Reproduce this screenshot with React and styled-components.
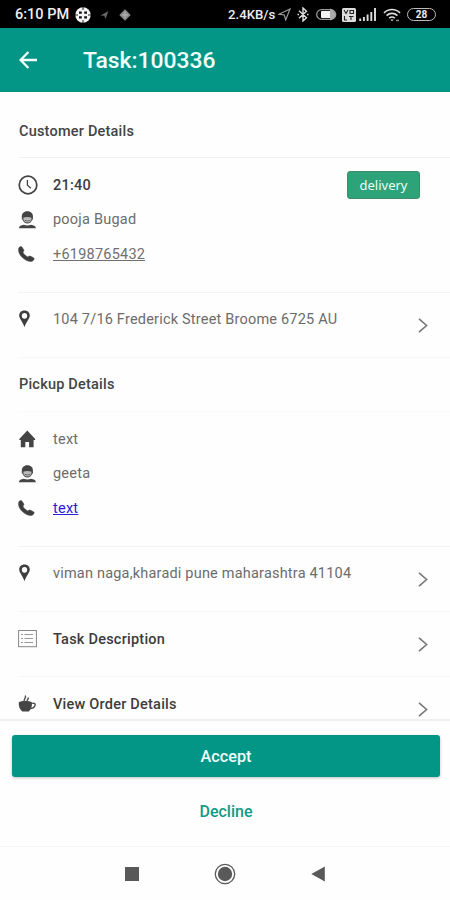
import styled, { createGlobalStyle } from "styled-components"

const contacts = [
    { icon: "clock", text: "21:40", bold: true, tag: "delivery" },
    { icon: "user", text: "pooja Bugad", spacing: "0.22px" },
    { icon: "phone", text: "+6198765432", link: "#707070", spacing: "0.22px" },
]

const pickup = [
    { icon: "home", text: "text" },
    { icon: "user", text: "geeta" },
    { icon: "phone", text: "text", link: "#2a20d8" },
]

export default function App (){
    return(
        <>
            <GlobalStyle />
            <Screen>
                <StatusBar>
                    <Clock>6:10 PM</Clock>
                    <StatusIcon name="app" width={16} height={16} left={6}/>
                    <StatusIcon name="smallArrow" width={9} height={10} left={9}/>
                    <StatusIcon name="diamond" width={12} height={12} left={10}/>
                    <Speed>2.4KB/s</Speed>
                    <StatusIcon name="arrow" width={13} height={13} left={3}/>
                    <StatusIcon name="bluetooth" width={12} height={15} left={6}/>
                    <StatusIcon name="toggle" width={21} height={13} left={7}/>
                    <StatusIcon name="volte" width={14} height={14} left={5}/>
                    <StatusIcon name="signal" width={17} height={13} left={3}/>
                    <StatusIcon name="wifi" width={18} height={14} left={7}/>
                    <Battery>28</Battery>
                </StatusBar>

                <Header>
                    <BackButton aria-label="Back">
                        <svg width="18" height="18" viewBox="0 0 18 18" fill="none" stroke="currentColor" strokeWidth="2.3">
                            <path d="M18 9H1.8M9.4 1L1.6 9l7.8 8" />
                        </svg>
                    </BackButton>
                    <Title>Task:100336</Title>
                </Header>

                <Content>
                    <Heading $first>Customer Details</Heading>
                    <ContactList items={contacts} />
                    <LinkRow icon="pin" spacing="0.2px">104 7/16 Frederick Street Broome 6725 AU</LinkRow>
                    <Heading>Pickup Details</Heading>
                    <ContactList items={pickup} />
                    <LinkRow icon="pin" spacing="0.2px">viman naga,kharadi pune maharashtra 41104</LinkRow>
                    <LinkRow icon="list" bold>Task Description</LinkRow>
                    <LinkRow icon="cup" bold>View Order Details</LinkRow>
                </Content>

                <Footer>
                    <AcceptButton>Accept</AcceptButton>
                    <DeclineButton>Decline</DeclineButton>
                </Footer>

                <NavBar>
                    <svg width="14" height="14"><rect width="14" height="14" fill="#595959" /></svg>
                    <svg width="22" height="22" viewBox="0 0 22 22">
                        <circle cx="11" cy="11" r="9.7" fill="none" stroke="#595959" strokeWidth="1.3" />
                        <circle cx="11" cy="11" r="7.2" fill="#595959" />
                    </svg>
                    <svg width="14" height="16" viewBox="0 0 14 16"><path d="M13.8.4v15L.3 7.9z" fill="#595959" /></svg>
                </NavBar>
            </Screen>
        </>
    )
}

function ContactList({ items }){
    return(
        <Contacts>
            {items.map((item, index)=> (
                <ContactRow key={index}>
                    <IconBox><Icon name={item.icon}/></IconBox>
                    {item.link
                        ? <PhoneLink href="#" $color={item.link} $spacing={item.spacing}>{item.text}</PhoneLink>
                        : <Label $bold={item.bold} $spacing={item.spacing}>{item.text}</Label>}
                    {item.tag && <Tag>{item.tag}</Tag>}
                </ContactRow>
            ))}
        </Contacts>
    )
}

function LinkRow({ icon, bold, spacing, children }){
    return(
        <Row>
            <IconBox><Icon name={icon}/></IconBox>
            <RowLabel $bold={bold} $spacing={spacing}>{children}</RowLabel>
            <Chevron width="10" height="15" viewBox="0 0 10 15">
                <path d="M1 .8l7.6 6.7L1 14.2" />
            </Chevron>
        </Row>
    )
}

function Icon({ name }){
    switch(name){
        case "clock":
            return(
                <svg width="20" height="20" viewBox="0 0 20 20" fill="none" stroke="#444">
                    <circle cx="10" cy="10" r="8.8" strokeWidth="1.7" />
                    <path d="M9.4 5v5.2l3.6 3" strokeWidth="1.3" />
                </svg>
            )
        case "user":
            return(
                <svg width="19" height="18" viewBox="0 0 19 18">
                    <path d="M3.900 7C3.400 2.500 5.800.3 9.400.3s6 2.200 5.500 6.700l.2 1.200-1 .6c-.6 2.400-2.500 3.800-4.700 3.800s-4.100-1.400-4.700-3.800l-1-.6z" fill="#444" />
                    <path d="M5.200 6.800c2.800-1 5.600-1 8.400 0 0 2.900-1.700 4.700-4.200 4.700s-4.200-1.800-4.200-4.700z" fill="#bbb" />
                    <path d="M6.800 9.300c1.600.8 3.600.8 5.200 0" fill="none" stroke="#666" />
                    <path d="M.9 17.300c.2-2.300 2.100-3.200 5-3.600 2 1 5 1 7 0 2.900.4 4.800 1.300 5 3.600z" fill="#444" />
                </svg>
            )
        case "phone":
            return(
                <svg width="17" height="17" viewBox="0 0 17 17">
                    <path d="M1.300 1.200C2.200.3 3.400.3 4.100 1.200l1.600 2.600c.5.9.1 1.500-.8 2.200.8 2.100 2.500 3.700 4.900 5 1-.9 1.900-1.200 2.800-.7l2.900 1.400c.9.7.8 1.600-.2 2.700-1.800 1.900-5 1.200-7.900-.6C3.500 11.500.5 7.600.5 3.800c0-1 .2-1.900.8-2.600z" fill="#3e3e3e" stroke="#3e3e3e" strokeWidth=".5" />
                </svg>
            )
        case "home":
            return(
                <svg width="18" height="18" viewBox="0 0 18 18">
                    <path d="M9.300.5L1.300 9v1h1.500v7.300h4.500v-5.200h3.800v5.200h4.500V10h1.600V9z" fill="#444" />
                </svg>
            )
        case "pin":
            return(
                <svg width="13" height="18" viewBox="-1 0 13 18">
                    <path fillRule="evenodd" d="M5.500.4C2.200.4.200 2.600.200 5.600c0 3.300 3.200 5.600 5.300 11.600 2.100-6 5.300-8.300 5.300-11.600C10.800 2.600 8.800.4 5.500.4zm0 2.500a2.700 2.900 0 1 1 0 5.800 2.700 2.900 0 0 1 0-5.800z" fill="#3e3e3e" />
                </svg>
            )
        case "list":
            return(
                <svg width="20" height="19" viewBox="0 0 20 19" fill="none" stroke="#888">
                    <rect x=".6" y="1.500" width="17.800" height="16.200" />
                    <path d="M3 5.500h2M3 9.500h2M3 13.500h2M6.500 5.500H15M6.500 9.500H15M6.500 13.500H15" strokeWidth="1.200" stroke="#999" />
                </svg>
            )
        case "cup":
            return(
                <svg width="18" height="19" viewBox="0 0 18 19">
                    <path d="M.8 8.300C3 6.500 11.500 6.500 13.900 8.300c.3 3.800-.5 6.800-3.100 9.200H4.200C1.500 15.200.5 12.200.8 8.300z" fill="#444" />
                    <path d="M13.600 9.500c2-.8 3.900-.3 3.500 1.700-.3 2-2.200 3.200-4.700 3.500" fill="none" stroke="#444" strokeWidth="1.300" />
                    <path d="M6.500 7.500C4.700 5.500 8.700 4.300 7.300 1.500M9.300 7.500c-1.200-1.500 1.600-2.200 1-4" fill="none" stroke="#555" strokeWidth="1.500" />
                </svg>
            )
        default:
            return null
    }
}

const glyphs = {
    app: (
        <>
            <circle cx="8" cy="8" r="7.700" fill="#f4f4f4" />
            <path d="M4 4.500h2.800v2.300H4zM9.200 4.500H12v2.300H9.200zM4 9.300h2.800v2.300H4zM9.200 9.300H12v2.300H9.200z" fill="#111" />
            <path d="M8 0v3M8 13v3M0 8h3M13 8h3" stroke="#222" />
        </>
    ),
    smallArrow: <path d="M.5 5.500L8.500 1 5.500 9 4.300 5.800z" fill="#666" />,
    diamond: (
        <>
            <path d="M6 .3L11.700 6 6 11.700.3 6z" fill="#8a8a8a" />
            <path d="M6 3v6M3 6h6" stroke="#b8b8b8" />
        </>
    ),
    arrow: <path d="M1 6.200L12 1 7.700 12 6.300 7z" fill="none" stroke="#999" strokeWidth="1.200" />,
    bluetooth: <path d="M2 3.800l7.500 7L6 14V1l3.500 3.200-7.500 7M.5 7.500h1.500M10 7.500h1.500" fill="none" stroke="#ddd" strokeWidth="1.400" />,
    toggle: (
        <>
            <rect x=".7" y="1.700" width="19" height="9.600" rx="4.800" fill="none" stroke="#999" strokeWidth="1.300" />
            <rect x="5" y="3" width="10" height="7" rx="1" fill="#f4f4f4" />
            <path d="M14 .5c3 1 5 3 5.500 6-.5 3-2.500 5-5.500 6z" fill="#aaa" />
        </>
    ),
    volte: (
        <>
            <rect width="14" height="14" rx="1.500" fill="#ddd" />
            <path d="M2 2l2 3.500L6 2M8 2.500h3.500v3H8zM2.500 8v4H5M7 8.500h4.500M9 8.500V12" fill="none" stroke="#222" strokeWidth="1.100" />
        </>
    ),
    signal: <path d="M1.200 13v-2.500M4.900 13V9M8.600 13V6.500M12.300 13V4M16 13V0" stroke="#ddd" strokeWidth="1.900" />,
    wifi: (
        <>
            <path d="M1 5c4.400-4.600 11.600-4.600 16 0M3.600 7.600c3-3 7.800-3 10.800 0M6.200 10.200c1.600-1.600 4-1.600 5.600 0" fill="none" stroke="#ddd" strokeWidth="1.600" />
            <path d="M7.300 11.500L9 13.300l1.700-1.800z" fill="#ddd" />
            <path d="M13 12.500h3" stroke="#888" strokeWidth="1.500" />
        </>
    ),
}

function StatusIcon({ name, width, height, left }){
    return(
        <Glyph width={width} height={height} viewBox={`0 0 ${width} ${height}`} $left={left}>
            {glyphs[name]}
        </Glyph>
    )
}

const GlobalStyle = createGlobalStyle`
    *{
        box-sizing: border-box;
    }
    body{
        margin: 0;
        background-color: #fefefe;
        font-family: Roboto, sans-serif;
    }
    button{
        border: none;
        font-family: inherit;
        cursor: pointer;
    }
`

const Screen = styled.div`
    display: flex;
    flex-direction: column;
    width: 450px;
    height: 900px;
    overflow: hidden;
    background-color: #fefefe;
`

const StatusBar = styled.div`
    display: flex;
    align-items: center;
    flex-shrink: 0;
    height: 28px;
    padding: 1px 14px 0 15px;
    background-color: #000;
    color: #ededed;
`

const Clock = styled.span`
    width: 54px;
    font-size: 14.500px;
    font-weight: 500;
    white-space: nowrap;
`

const Speed = styled.span`
    width: 47px;
    margin-left: auto;
    font-size: 13.200px;
    font-weight: 500;
    white-space: nowrap;
`

const Glyph = styled.svg`
    flex-shrink: 0;
    margin-left: ${({ $left }) => $left}px;
`

const Battery = styled.span`
    width: 29px;
    height: 13px;
    margin-left: 6px;
    border: 1.500px solid #bbb;
    border-radius: 7px;
    font-size: 10px;
    font-weight: 700;
    line-height: 11px;
    text-align: center;
`

const Header = styled.header`
    display: flex;
    align-items: center;
    flex-shrink: 0;
    height: 64px;
    padding-left: 19px;
    background-color: #039686;
    color: #f2fffc;
`

const BackButton = styled.button`
    display: flex;
    width: 18px;
    padding: 0;
    background: none;
    color: inherit;
`

const Title = styled.h1`
    margin: 0 0 0 46px;
    padding-top: 2px;
    font-size: 22.900px;
    font-weight: 500;
    line-height: 28px;
`

const Content = styled.main`
    flex: 1;
    min-height: 0;
    overflow: hidden;
`

const Heading = styled.h2`
    height: ${({ $first }) => $first ? "66px" : "53.500px"};
    margin: 0 0 0 19px;
    padding-top: ${({ $first }) => $first ? "30px" : "17px"};
    border-bottom: 1px solid ${({ $first }) => $first ? "#f1f1f1" : "#fafafa"};
    color: #444;
    font-size: 14.500px;
    font-weight: 500;
    line-height: 20px;
    letter-spacing: 0.21px;
`

const Contacts = styled.div`
    height: 135px;
    margin-left: 18px;
    padding-top: 10px;
    border-bottom: 1px solid #f3f3f3;
`

const ContactRow = styled.div`
    display: flex;
    align-items: center;
    height: 34.500px;
`

const IconBox = styled.span`
    display: flex;
    flex-shrink: 0;
    width: 35px;
`

const Label = styled.span`
    padding-top: 1px;
    color: ${({ $bold }) => $bold ? "#3c3c3c" : "#6c6c6c"};
    font-size: 14.500px;
    font-weight: ${({ $bold }) => $bold ? 500 : 400};
    line-height: 20px;
    letter-spacing: ${({ $spacing }) => $spacing || "0.23px"};
    white-space: nowrap;
`

const RowLabel = styled(Label)`
    padding-top: ${({ $bold }) => $bold ? "1px" : "0"};
`

const PhoneLink = styled.a`
    padding-top: 1px;
    color: ${({ $color }) => $color};
    font-size: 14.500px;
    line-height: 20px;
    letter-spacing: ${({ $spacing }) => $spacing || "0.23px"};
`

const Tag = styled.span`
    width: 73px;
    height: 28px;
    margin: 0 30px 0 auto;
    border: 1px solid #3c8d6b;
    border-radius: 3px;
    background-color: #2ea279;
    color: #e8fff6;
    font-family: "Noto Sans", sans-serif;
    font-size: 13px;
    line-height: 26px;
    text-align: center;
`

const Row = styled.div`
    display: flex;
    align-items: flex-start;
    height: 65.300px;
    margin-left: 18px;
    padding: 17px 22px 0 0;
    border-bottom: 1px solid #f7f7f7;
`

const Chevron = styled.svg`
    flex-shrink: 0;
    margin: 8px 0 0 auto;
    fill: none;
    stroke: #777;
    stroke-width: 1.600;
`

const Footer = styled.footer`
    display: flex;
    flex-direction: column;
    align-items: center;
    flex-shrink: 0;
    height: 128px;
    padding: 14px 10px 0 12px;
    border-top: 2px solid #f1f1f1;
    border-bottom: 1px solid #f5f5f5;
`

const AcceptButton = styled.button`
    width: 100%;
    height: 42px;
    border-radius: 3px;
    background-color: #039686;
    box-shadow: 0 1px 3px rgba(0, 0, 0, 0.25);
    color: #f2fffc;
    font-size: 16.200px;
    font-weight: 500;
`

const DeclineButton = styled.button`
    margin-top: 21px;
    padding: 4px 12px;
    background: none;
    color: #129a85;
    font-size: 16px;
    font-weight: 500;
`

const NavBar = styled.nav`
    display: flex;
    align-items: center;
    justify-content: space-between;
    flex-shrink: 0;
    height: 53px;
    padding: 0 125px 0 125px;
`
